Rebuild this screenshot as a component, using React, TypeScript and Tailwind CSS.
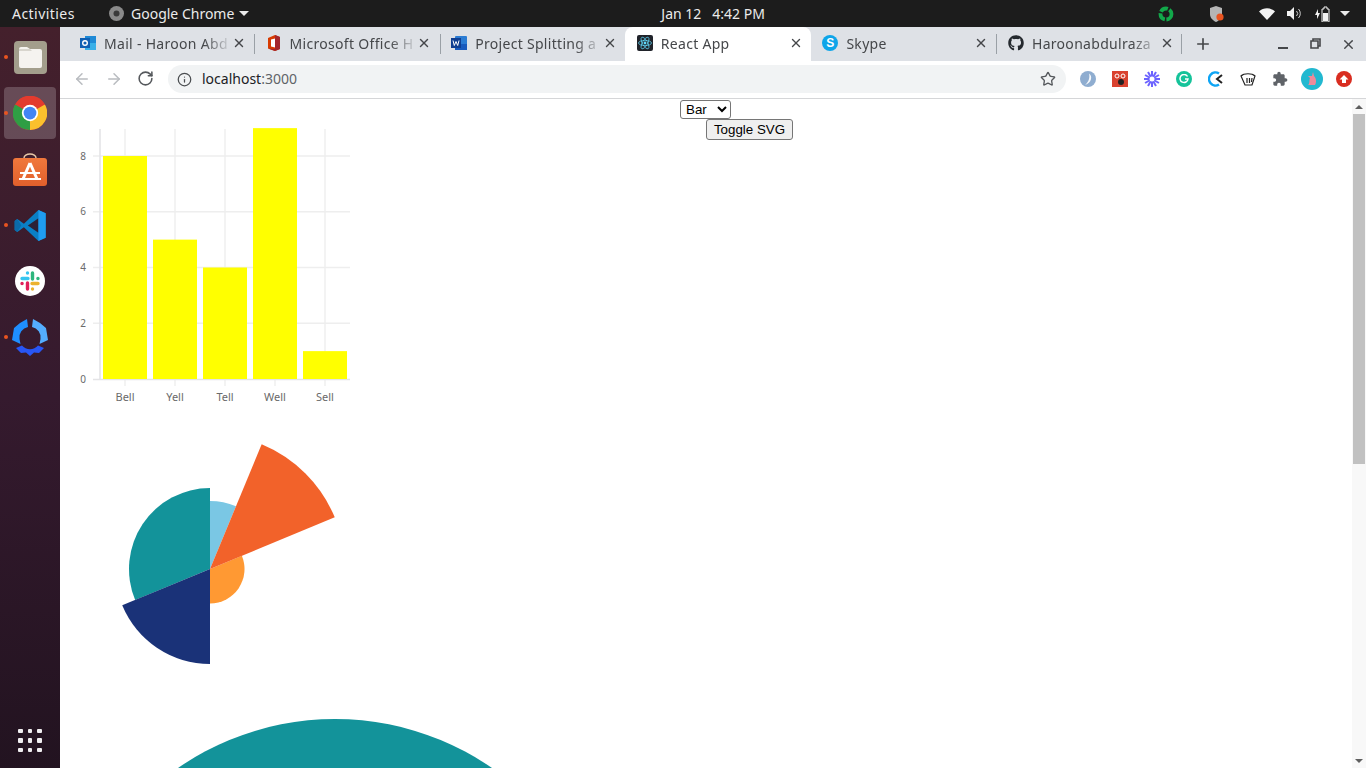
import { ArrowLeft, ArrowRight, Info, Plus, RotateCw, Star, X } from 'lucide-react'
import { FaGithub } from 'react-icons/fa'
import type { ReactNode } from 'react'

const uiFont = 'font-["Noto_Sans",sans-serif]'

function polar(cx: number, cy: number, r: number, deg: number) {
  const rad = (deg * Math.PI) / 180
  return [cx + r * Math.sin(rad), cy - r * Math.cos(rad)]
}

function wedge(cx: number, cy: number, r: number, from: number, to: number) {
  const [x1, y1] = polar(cx, cy, r, from)
  const [x2, y2] = polar(cx, cy, r, to)
  const large = to - from > 180 ? 1 : 0
  return `M${cx} ${cy}L${x1} ${y1}A${r} ${r} 0 ${large} 1 ${x2} ${y2}Z`
}

function ChromeLogo({ size = 34 }: { size?: number }) {
  return (
    <svg width={size} height={size} viewBox="0 0 48 48">
      <circle cx="24" cy="24" r="24" fill="#e33b2e" />
      <path d="M24 24 45 12A24 24 0 0 1 24 48Z" fill="#fbc02d" />
      <path d="M24 24 24 48A24 24 0 0 1 3 12Z" fill="#2f9e44" />
      <path d="M3 12A24 24 0 0 1 45 12H24Z" fill="#e33b2e" />
      <circle cx="24" cy="24" r="11.5" fill="#fff" />
      <circle cx="24" cy="24" r="9" fill="#4285f4" />
    </svg>
  )
}

function FilesIcon() {
  return (
    <div className="flex h-[33px] w-[33px] items-center justify-center rounded-[4px] bg-[#a39e8c]">
      <svg width="25" height="22" viewBox="0 0 25 22">
        <path d="M1 3a2 2 0 0 1 2-2h6l3 2h10a2 2 0 0 1 2 2v15a2 2 0 0 1-2 2H3a2 2 0 0 1-2-2Z" fill="#f5f3ef" />
        <path d="M1 3h11l2 2H1Z" fill="#d8d5cd" />
      </svg>
    </div>
  )
}

function StoreIcon() {
  return (
    <svg width="34" height="33" viewBox="0 0 34 33">
      <defs>
        <linearGradient id="bag" x1="0" x2="0" y1="0" y2="1">
          <stop offset="0" stopColor="#f0783c" />
          <stop offset="1" stopColor="#e2602c" />
        </linearGradient>
      </defs>
      <path d="M11 6V5a6 4 0 0 1 12 0v1" fill="none" stroke="#e8c9a8" strokeWidth="1.4" />
      <rect x="0" y="5" width="34" height="28" rx="3" fill="url(#bag)" />
      <path d="M17 10 10 26M17 10 24 26" stroke="#fff" strokeWidth="3" fill="none" />
      <rect x="7" y="19" width="20" height="2" fill="#fff" />
      <rect x="6" y="25" width="22" height="2" fill="#fff" />
    </svg>
  )
}

function VsCodeIcon() {
  return (
    <svg width="33" height="33" viewBox="0 0 100 100">
      <path d="M74 3 96 13V87L74 97 30 55 10 70 2 64V36L10 30 30 45Z" fill="#0a7fc5" />
      <path d="M74 28 42 50 74 72Z" fill="#2c2036" />
      <path d="M74 3 96 13V87L74 97Z" fill="#1f9cf0" />
      <path d="M10 30 2 36V64L10 70 22 50Z" fill="#0b6aa8" />
    </svg>
  )
}

function SlackIcon() {
  return (
    <div className="flex h-[30px] w-[30px] items-center justify-center rounded-full bg-white">
      <svg width="20" height="20" viewBox="0 0 20 20" strokeWidth="3.4" strokeLinecap="round" fill="none">
        <path d="M2 7.5h6M7.5 2v.1" stroke="#36c5f0" />
        <path d="M12.5 2v6M18 7.5h-.1" stroke="#2eb67d" />
        <path d="M18 12.5h-6M12.5 18v-.1" stroke="#ecb22e" />
        <path d="M7.5 18v-6M2 12.5h.1" stroke="#e01e5a" />
      </svg>
    </div>
  )
}

function GitKrakenIcon() {
  return (
    <svg width="36" height="37" viewBox="0 0 36 37">
      <path d="M8 4 15 0 16 8A10.5 10.5 0 0 0 7.5 20L8.500 25 0 21 2 9Z" fill="#1f8fff" />
      <path d="M28 4 21 0 20 8A10.500 10.500 0 0 1 28.500 20L27.500 25 36 21 34 9Z" fill="#54aeff" />
      <path d="M4 29 10 26.500A10.500 10.500 0 0 0 26 26.500L32 29 27 34 22 33.500 18 37 14 33.500 9 34Z" fill="#2856f5" />
    </svg>
  )
}

function DockItem({ children, dot, active }: { children: ReactNode; dot?: boolean; active?: boolean }) {
  return (
    <div className="relative flex h-[56px] w-[60px] items-center justify-center">
      {dot && <span className="absolute left-[4px] top-[26px] h-[4px] w-[4px] rounded-full bg-[#e95420]" />}
      <div className={`flex h-[52px] w-[52px] items-center justify-center rounded-[4px] ${active ? 'bg-white/20' : ''}`}>
        {children}
      </div>
    </div>
  )
}

function Dock() {
  return (
    <aside className="flex w-[60px] shrink-0 flex-col bg-gradient-to-b from-[#44202c] via-[#351a2e] to-[#221320] pt-[2px]">
      <DockItem dot><FilesIcon /></DockItem>
      <DockItem dot active><ChromeLogo /></DockItem>
      <DockItem><StoreIcon /></DockItem>
      <DockItem dot><VsCodeIcon /></DockItem>
      <DockItem><SlackIcon /></DockItem>
      <DockItem dot><GitKrakenIcon /></DockItem>
      <div className="mt-auto mb-[16px] grid w-[24px] grid-cols-3 gap-[5px] self-center">
        {Array.from({ length: 9 }).map((_, i) => (
          <span key={i} className="h-[4.5px] w-[4.5px] rounded-[1px] bg-[#f0eef0]" />
        ))}
      </div>
    </aside>
  )
}

function TopBar() {
  return (
    <header className={`flex h-[27px] items-center bg-[#1c1c1c] text-[14px] text-[#ebebeb] ${uiFont}`}>
      <span className="ml-[12px] w-[97px] tracking-[0.45px]">Activities</span>
      <svg width="15" height="15" viewBox="0 0 15 15" className="mr-[7px]">
        <circle cx="7.5" cy="7.5" r="7.5" fill="#8a8a8a" />
        <circle cx="7.5" cy="7.5" r="3" fill="#3a3a3a" />
      </svg>
      <span>Google Chrome</span>
      <span className="ml-[5px] h-0 w-0 border-x-[5px] border-t-[5px] border-x-transparent border-t-[#ebebeb]" />
      <span className="ml-[412px] w-[239px] whitespace-pre">Jan 12   4:42 PM</span>
      {/* tray */}
      <svg width="18" height="16" viewBox="0 0 18 16" className="ml-[257px]">
        <circle cx="9" cy="8" r="5.5" fill="none" stroke="#12a84a" strokeWidth="3.8" strokeDasharray="8 1.6" />
      </svg>
      <svg width="14" height="16" viewBox="0 0 14 16" className="ml-[35px]">
        <path d="M6 0 12 2V8C12 12 9 14.5 6 16 3 14.5 0 12 0 8V2Z" fill="#b5b5b5" />
        <circle cx="10" cy="11" r="3.6" fill="#e95420" />
      </svg>
      <svg width="16" height="12" viewBox="0 0 16 12" className="ml-[35px]">
        <path d="M0 3.5C4.5-.8 11.5-.8 16 3.5L8 12Z" fill="#f2f2f2" />
      </svg>
      <svg width="15" height="13" viewBox="0 0 15 13" className="ml-[12px]">
        <path d="M0 4H3L7 0V13L3 9H0Z" fill="#f2f2f2" />
        <path d="M9.5 4a3.5 3.5 0 0 1 0 5M11.5 2a6.5 6.5 0 0 1 0 9" fill="none" stroke="#cfcfcf" />
      </svg>
      <svg width="15" height="16" viewBox="0 0 15 16" className="ml-[13px]">
        <path d="M3 3 0 9H2V13L5 7H3Z" fill="#f2f2f2" />
        <path d="M7 3H9V1H12V3H14V16H7Z" fill="none" stroke="#f2f2f2" />
        <rect x="8" y="7" width="5" height="8" fill="#f2f2f2" />
      </svg>
      <span className="ml-[10px] h-0 w-0 border-x-[5px] border-t-[5px] border-x-transparent border-t-[#ebebeb]" />
    </header>
  )
}

function OutlookIcon() {
  return (
    <svg width="16" height="16" viewBox="0 0 16 16">
      <rect x="5" y="1" width="11" height="14" fill="#1f8ad6" />
      <path d="M5 8h11v7H5Z" fill="#39b0e8" />
      <rect x="0" y="3" width="10" height="10" fill="#0f5fb3" />
      <circle cx="5" cy="8" r="2.3" fill="none" stroke="#fff" strokeWidth="1.4" />
    </svg>
  )
}

function OfficeIcon() {
  return (
    <svg width="16" height="16" viewBox="0 0 16 16">
      <path d="M9 0 14 2V14L9 16 2 13.5V3Z" fill="#d83b01" />
      <path d="M9 3.5 5 4.5V11.5L9 12.5Z" fill="#fff" />
      <path d="M9 0 14 2V14L9 16 2 13.5 9 14Z" fill="#a4262c" />
    </svg>
  )
}

function WordIcon() {
  return (
    <svg width="16" height="16" viewBox="0 0 16 16">
      <rect x="4" y="1" width="12" height="14" rx="1" fill="#2b7cd3" />
      <rect x="4" y="9" width="12" height="6" fill="#185abd" />
      <rect x="0" y="3" width="10" height="10" fill="#103f91" />
      <path d="M2 5.5 3.3 10.5 5 6.5 6.7 10.5 8 5.5" fill="none" stroke="#fff" strokeWidth="1" />
    </svg>
  )
}

function ReactIcon() {
  return (
    <svg width="16" height="16" viewBox="-8 -8 16 16">
      <rect x="-8" y="-8" width="16" height="16" rx="2" fill="#20232a" />
      <circle r="1.4" fill="#61dafb" />
      <g fill="none" stroke="#61dafb" strokeWidth="0.7">
        <ellipse rx="6.5" ry="2.6" />
        <ellipse rx="6.5" ry="2.6" transform="rotate(60)" />
        <ellipse rx="6.5" ry="2.6" transform="rotate(120)" />
      </g>
    </svg>
  )
}

function SkypeIcon() {
  return (
    <span className="flex h-[16px] w-[16px] items-center justify-center rounded-full bg-[#0ea5e9] font-['Liberation_Sans',sans-serif] text-[12px] font-bold leading-none text-white">
      S
    </span>
  )
}

const tabs: { title: string; icon: ReactNode; active?: boolean; sep?: string }[] = [
  { title: 'Mail - Haroon Abd', icon: <OutlookIcon />, sep: 'right-[-1px]' },
  { title: 'Microsoft Office H', icon: <OfficeIcon />, sep: 'right-[-2px]' },
  { title: 'Project Splitting a', icon: <WordIcon /> },
  { title: 'React App', icon: <ReactIcon />, active: true },
  { title: 'Skype', icon: <SkypeIcon />, sep: 'right-[-1px]' },
  { title: 'Haroonabdulraza', icon: <FaGithub size={16} color="#24292e" />, sep: 'right-0' },
]

function Tab({ title, icon, active, sep }: (typeof tabs)[number]) {
  return (
    <div className={`relative flex h-[38px] items-center pb-[6px] pl-[12px] pr-[8px] ${active ? '-mr-px w-[186.6px] rounded-t-[8px] bg-white' : 'w-[185.6px]'}`}>
      <span className="mr-[8px] flex w-[16px] shrink-0 justify-center">{icon}</span>
      <span className="w-[125px] overflow-hidden whitespace-nowrap text-[14px] tracking-[0.3px] text-[#45474a] [mask-image:linear-gradient(to_right,black_80%,rgba(0,0,0,0.2)_98%)]">
        {title}
      </span>
      <X size={14} strokeWidth={2.4} color="#45474a" className="ml-auto shrink-0" />
      {sep && <span className={`absolute top-[7px] h-[20px] w-px bg-[#9aa0a6] ${sep}`} />}
    </div>
  )
}

function TabStrip() {
  return (
    <div className={`flex h-[34px] items-start bg-[#dee1e6] pl-[8px] ${uiFont}`}>
      {tabs.map(t => <Tab key={t.title} {...t} />)}
      <Plus size={18} strokeWidth={2.2} color="#45474a" className="ml-[12px] mt-[8px]" />
      <div className="ml-[66px] mt-[20px] h-[2px] w-[10px] bg-[#45474a]" />
      <svg width="11" height="11" viewBox="0 0 11 11" className="ml-[22px] mt-[11px]">
        <path d="M3 3V1H10V8H8M1 3H8V10H1Z" fill="none" stroke="#45474a" strokeWidth="1.6" />
      </svg>
      <X size={15} strokeWidth={2.2} color="#45474a" className="ml-[20px] mt-[10px]" />
    </div>
  )
}

function Ext({ children }: { children: ReactNode }) {
  return <span className="flex h-[32px] w-[32px] items-center justify-center">{children}</span>
}

function Toolbar() {
  return (
    <div className={`flex h-[38px] items-center border-b border-[#d5d6d8] bg-white pb-[1px] ${uiFont}`}>
      <div className="ml-[6px] flex w-[102px]">
        <span className="flex w-[32px] justify-center"><ArrowLeft size={18} color="#b9bcc0" /></span>
        <span className="flex w-[32px] justify-center"><ArrowRight size={18} color="#b9bcc0" /></span>
        <span className="-ml-px flex w-[32px] justify-center"><RotateCw size={17} strokeWidth={2.2} color="#55585c" /></span>
      </div>
      <div className="flex h-[28px] w-[898px] items-center rounded-full bg-[#f1f3f4] pl-[9px] pr-[10px] text-[14px]">
        <Info size={15} color="#4a4d50" />
        <span className="mb-[2px] ml-[10px] text-[#202124]">localhost<span className="text-[#5f6368]">:3000</span></span>
        <Star size={16} color="#55585c" className="ml-auto" />
      </div>
      <div className="ml-[6px] flex">
        <Ext>
          <svg width="16" height="16" viewBox="0 0 16 16">
            <circle cx="8" cy="8" r="8" fill="#8fadd0" />
            <path d="M9 2.500C13 5 11.500 12 5 14 9 10.500 10 6.500 9 2.500Z" fill="#f5f8fb" />
          </svg>
        </Ext>
        <Ext>
          <svg width="16" height="16" viewBox="0 0 16 16">
            <rect width="16" height="16" fill="#d9422f" />
            <circle cx="5" cy="5" r="2" fill="none" stroke="#fff" />
            <circle cx="11" cy="5" r="2" fill="none" stroke="#fff" />
            <circle cx="9" cy="11" r="3" fill="#222" />
          </svg>
        </Ext>
        <Ext>
          <svg width="16" height="16" viewBox="-8 -8 16 16" stroke="#6c63ff" strokeWidth="2">
            {[0, 30, 60, 90, 120, 150].map(a => (
              <line key={a} x1="-8" x2="8" y1="0" y2="0" transform={`rotate(${a})`} />
            ))}
            <circle r="2.5" fill="#fff" stroke="none" />
          </svg>
        </Ext>
        <Ext>
          <span className="flex h-[16px] w-[16px] items-center justify-center rounded-full bg-[#15c39a]">
            <svg width="10" height="10" viewBox="0 0 10 10">
              <path d="M8.5 2.5A4 4 0 1 0 9 5H6" fill="none" stroke="#fff" strokeWidth="1.5" />
            </svg>
          </span>
        </Ext>
        <Ext>
          <svg width="16" height="16" viewBox="0 0 16 16" fill="none" strokeWidth="2.6">
            <path d="M11 2.5A6.5 6.5 0 1 0 11 13.5" stroke="#0ea5f5" />
            <path d="M14 4 9 8 14 12" stroke="#222" strokeWidth="2" />
          </svg>
        </Ext>
        <Ext>
          <svg width="16" height="14" viewBox="0 0 16 14" fill="none" stroke="#222" strokeWidth="1.2">
            <path d="M1 4C4 1 12 1 15 4L12 13H5Z" />
            <path d="M7 6V11M9.5 6V11M12 6 11.5 10" />
          </svg>
        </Ext>
        <Ext>
          <svg width="16" height="16" viewBox="0 0 24 24" fill="#5f6368">
            <path d="M20.5 11H19V7c0-1.1-.9-2-2-2h-4V3.5C13 2.12 11.88 1 10.5 1S8 2.12 8 3.5V5H4c-1.1 0-1.99.9-1.99 2v3.8H3.5c1.49 0 2.7 1.21 2.7 2.7s-1.21 2.7-2.7 2.7H2V20c0 1.1.9 2 2 2h3.8v-1.5c0-1.49 1.21-2.7 2.7-2.7 1.49 0 2.7 1.21 2.7 2.7V22H17c1.1 0 2-.9 2-2v-4h1.5c1.38 0 2.5-1.12 2.5-2.5S21.88 11 20.5 11z" />
          </svg>
        </Ext>
        <Ext>
          <span className="flex h-[22px] w-[22px] items-center justify-center rounded-full bg-[#22b8d0]">
            <svg width="10" height="14" viewBox="0 0 10 14">
              <path d="M6 0 7 4C9 6 10 10 8 13H1C3 12 2 8 3 6L1 4 5 4Z" fill="#ee8a9a" />
            </svg>
          </span>
        </Ext>
        <Ext>
          <span className="flex h-[16px] w-[16px] items-center justify-center rounded-full bg-[#d92d20]">
            <svg width="10" height="10" viewBox="0 0 10 10">
              <path d="M5 1 9.5 5.5H7V9H3V5.5H.5Z" fill="#fff" />
            </svg>
          </span>
        </Ext>
      </div>
    </div>
  )
}

const bars = [
  { label: 'Bell', x: 103, value: 8 },
  { label: 'Yell', x: 153, value: 5 },
  { label: 'Tell', x: 203, value: 4 },
  { label: 'Well', x: 253, value: 9 },
  { label: 'Sell', x: 303, value: 1 },
]

function BarChart() {
  const y = (v: number) => 379 - v * 27.875
  return (
    <svg width="300" height="320" viewBox="60 99 300 320" className="block font-['Noto_Sans',sans-serif]">
      {[2, 4, 6, 8].map(v => (
        <line key={v} x1="93" x2="350" y1={y(v)} y2={y(v)} stroke="#eeeeee" strokeWidth="1.4" />
      ))}
      {bars.map(b => (
        <line key={b.label} x1={b.x + 22} x2={b.x + 22} y1="129" y2="386" stroke="#eeeeee" strokeWidth="1.4" />
      ))}
      <line x1="100" x2="100" y1="129" y2="380" stroke="#e4e4e6" strokeWidth="1.6" />
      <line x1="93" x2="350" y1="379.5" y2="379.5" stroke="#e4e4e6" strokeWidth="1.6" />
      {bars.map(b => (
        <rect key={b.label} x={b.x} y={y(b.value)} width="44" height={b.value * 27.875} fill="#ffff00" />
      ))}
      {[0, 2, 4, 6, 8].map(v => (
        <text key={v} x="83" y={y(v) + 3.5} textAnchor="middle" fontSize="10" fill="#6a6a6a">{v}</text>
      ))}
      {bars.map(b => (
        <text key={b.label} x={b.x + 22} y="401" textAnchor="middle" fontSize="11" fill="#6a6a6a">{b.label}</text>
      ))}
    </svg>
  )
}

function RoseChart() {
  const slices = [
    { r: 68, from: 0, to: 22.5, fill: '#7ac7e4' },
    { r: 34.5, from: 67.5, to: 180, fill: '#ff9933' },
    { r: 81, from: 247.5, to: 360, fill: '#13939a' },
    { r: 95, from: 180, to: 247.5, fill: '#1a3278' },
    { r: 135, from: 22.5, to: 67.5, fill: '#f2622a' },
  ]
  return (
    <svg width="300" height="296" viewBox="60 419 300 296" className="block">
      {slices.map(s => (
        <path key={s.fill} d={wedge(210, 569, s.r, s.from, s.to)} fill={s.fill} />
      ))}
    </svg>
  )
}

function BigCircle() {
  return (
    <svg width="500" height="60" viewBox="60 715 500 60" className="block">
      <circle cx="335" cy="995" r="276" fill="#13939a" />
    </svg>
  )
}

function Scrollbar() {
  return (
    <div className="relative w-[14px] shrink-0 bg-[#f8f8f8]">
      <span className="absolute left-[3px] top-[6px] h-0 w-0 border-x-[4px] border-b-[4px] border-x-transparent border-b-[#5f5f5f]" />
      <div className="absolute left-px top-[15px] h-[350px] w-[12px] bg-[#c1c1c1]" />
      <span className="absolute bottom-[5px] left-[3px] h-0 w-0 border-x-[4px] border-t-[4px] border-x-transparent border-t-[#5f5f5f]" />
    </div>
  )
}

export default function App() {
  return (
    <div className="flex h-screen flex-col overflow-hidden bg-white">
      <TopBar />
      <div className="flex min-h-0 flex-1">
        <Dock />
        <div className="flex min-w-0 flex-1 flex-col">
          <TabStrip />
          <Toolbar />
          <div className="flex min-h-0 flex-1">
            <main className="relative min-w-0 flex-1 overflow-hidden">
              {/* controls sit over the top of the chart row */}
              <div className="absolute inset-x-0 top-px font-['Liberation_Sans',sans-serif] text-[13.33px] text-black">
                <div className="pl-[620px]">
                  <select className="block h-[19px] w-[51px] rounded-[3px] border border-[#767676] bg-white pl-[1px]" defaultValue="Bar">
                    <option>Bar</option>
                    <option>Line</option>
                    <option>Pie</option>
                  </select>
                </div>
                <button className="ml-[646px] block h-[21px] w-[87px] rounded-[3px] border border-[#767676] bg-[#efefef]">
                  Toggle SVG
                </button>
              </div>
              <BarChart />
              <RoseChart />
              <BigCircle />
            </main>
            <Scrollbar />
          </div>
        </div>
      </div>
    </div>
  )
}
